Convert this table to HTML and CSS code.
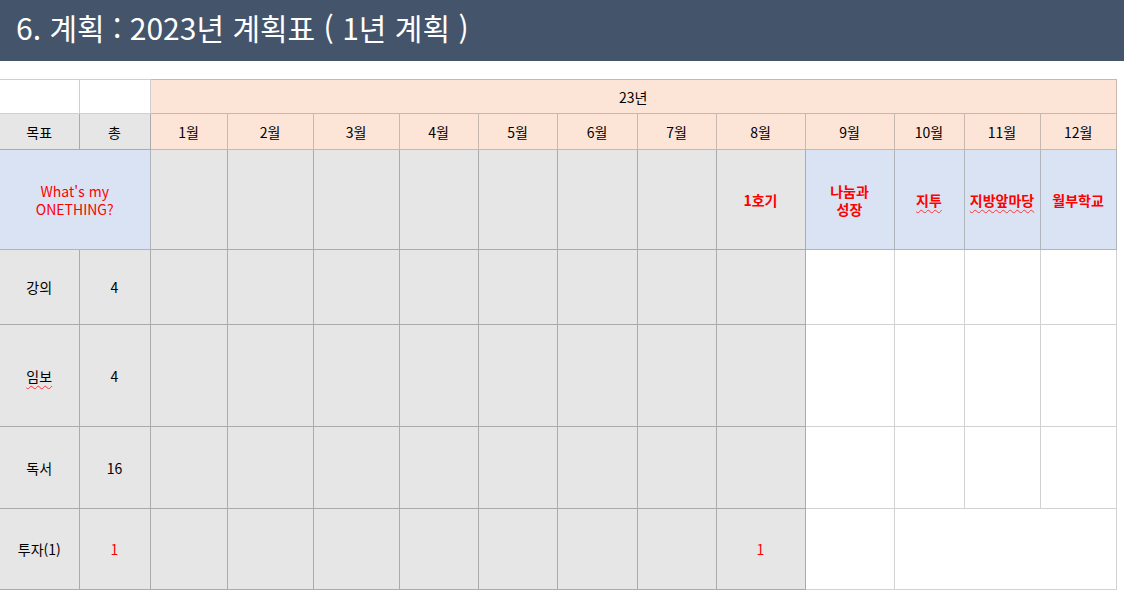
FILE: index.html
```html
<!DOCTYPE html>
<html lang="ko">
<head>
    <meta charset="UTF-8">
    <meta name="viewport" content="width=device-width, initial-scale=1.0">
    <title>2023년 계획표</title>
    <link rel="stylesheet" href="styles.css">
</head>
<body>
    <div class="title-bar">6. 계획 : 2023년 계획표 ( 1년 계획 )</div>

    <table class="plan">
        <colgroup>
            <col style="width:79px"><col style="width:71px">
            <col style="width:77px"><col style="width:86px"><col style="width:86px">
            <col style="width:79px"><col style="width:79px"><col style="width:80px">
            <col style="width:79px"><col style="width:89px"><col style="width:89px">
            <col style="width:70px"><col style="width:76px"><col style="width:76px">
        </colgroup>
        <tr class="row-year">
            <td class="blank first"></td>
            <td class="blank"></td>
            <td class="peach" colspan="12">23년</td>
        </tr>
        <tr class="row-month">
            <td class="gray first">목표</td>
            <td class="gray">총</td>
            <td class="peach">1월</td>
            <td class="peach">2월</td>
            <td class="peach">3월</td>
            <td class="peach">4월</td>
            <td class="peach">5월</td>
            <td class="peach">6월</td>
            <td class="peach">7월</td>
            <td class="peach">8월</td>
            <td class="peach">9월</td>
            <td class="peach">10월</td>
            <td class="peach">11월</td>
            <td class="peach">12월</td>
        </tr>
        <tr class="row-goal">
            <td class="blue first red" colspan="2">What's my<br>ONETHING?</td>
            <td class="gray"></td>
            <td class="gray"></td>
            <td class="gray"></td>
            <td class="gray"></td>
            <td class="gray"></td>
            <td class="gray"></td>
            <td class="gray"></td>
            <td class="gray red bold">1호기</td>
            <td class="blue red bold">나눔과<br>성장</td>
            <td class="blue red bold"><span class="typo">지투</span></td>
            <td class="blue red bold"><span class="typo">지방앞마당</span></td>
            <td class="blue red bold">월부학교</td>
        </tr>
        <tr class="row-lecture">
            <td class="gray first">강의</td>
            <td class="gray">4</td>
            <td class="gray"></td><td class="gray"></td><td class="gray"></td>
            <td class="gray"></td><td class="gray"></td><td class="gray"></td>
            <td class="gray"></td><td class="gray"></td>
            <td class="white"></td><td class="white"></td><td class="white"></td><td class="white"></td>
        </tr>
        <tr class="row-imbo">
            <td class="gray first"><span class="typo">임보</span></td>
            <td class="gray">4</td>
            <td class="gray"></td><td class="gray"></td><td class="gray"></td>
            <td class="gray"></td><td class="gray"></td><td class="gray"></td>
            <td class="gray"></td><td class="gray"></td>
            <td class="white"></td><td class="white"></td><td class="white"></td><td class="white"></td>
        </tr>
        <tr class="row-reading">
            <td class="gray first">독서</td>
            <td class="gray">16</td>
            <td class="gray"></td><td class="gray"></td><td class="gray"></td>
            <td class="gray"></td><td class="gray"></td><td class="gray"></td>
            <td class="gray"></td><td class="gray"></td>
            <td class="white"></td><td class="white"></td><td class="white"></td><td class="white"></td>
        </tr>
        <tr class="row-invest">
            <td class="gray first">투자(1)</td>
            <td class="gray red">1</td>
            <td class="gray"></td><td class="gray"></td><td class="gray"></td>
            <td class="gray"></td><td class="gray"></td><td class="gray"></td>
            <td class="gray"></td>
            <td class="gray red">1</td>
            <td class="white"></td>
            <td class="white" colspan="3"></td>
        </tr>
    </table>
</body>
</html>
```

FILE: styles.css
```css
body {
    margin: 0;
    background-color: #ffffff;
    font-family: "Noto Sans CJK KR", "Noto Sans", sans-serif;
    color: #000000;
}

.title-bar {
    height: 61px;
    line-height: 54px;
    background-color: #44546a;
    color: #ffffff;
    font-size: 30px;
    padding-left: 16px;
}

.plan {
    margin-top: 18px;
    border-collapse: collapse;
    table-layout: fixed;
    width: 1116px;
    font-size: 14px;
}

.plan td {
    border: 1px solid #ababab;
    text-align: center;
    vertical-align: middle;
    padding: 0;
    line-height: 18px;
}

.plan td.first {
    border-left: none;
}

.row-year { height: 34px; }
.row-month { height: 36px; }
.row-goal { height: 100px; }
.row-lecture { height: 75px; }
.row-imbo { height: 102px; }
.row-reading { height: 82px; }
.row-invest { height: 81px; }

.blank {
    background-color: #ffffff;
    border-color: #cfcfcf !important;
}

.peach {
    background-color: #fce4d6;
    border-color: #c9b8ae !important;
}

.gray {
    background-color: #e6e6e6;
}

.blue {
    background-color: #dae3f3;
    border-color: #b0b4bb !important;
}

.white {
    background-color: #ffffff;
    border-color: #d2d2d2 !important;
}

.red {
    color: #ff0000;
}

.bold {
    font-weight: bold;
}

.typo {
    text-decoration: underline wavy #ff3333;
    text-decoration-thickness: 1px;
    text-underline-offset: 3px;
}
```
